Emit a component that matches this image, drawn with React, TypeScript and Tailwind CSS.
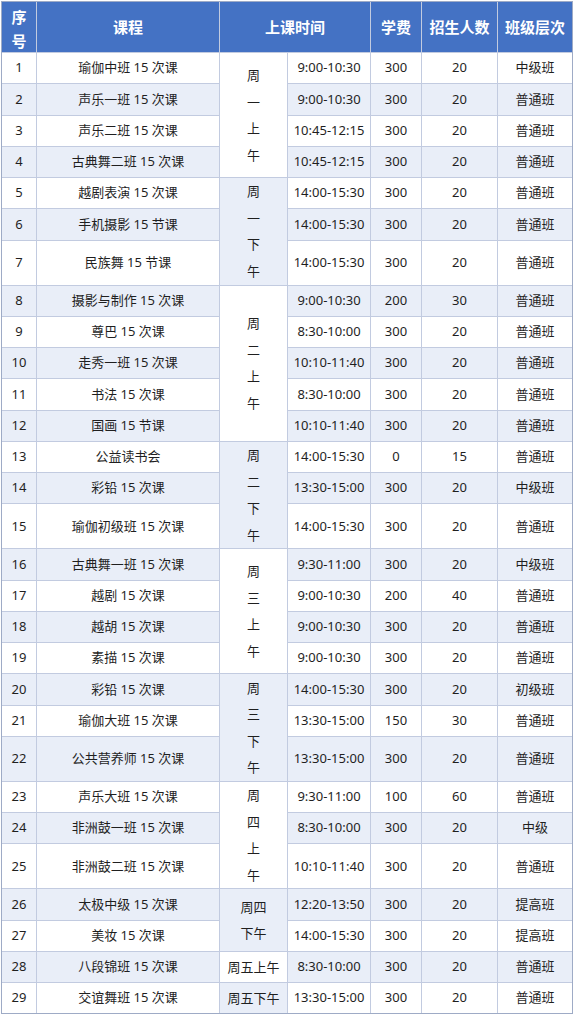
import React from "react";

type Row = [number, string, string, string, string, string];

const rows: Row[] = [
  [1, "瑜伽中班 15 次课", "9:00-10:30", "300", "20", "中级班"],
  [2, "声乐一班 15 次课", "9:00-10:30", "300", "20", "普通班"],
  [3, "声乐二班 15 次课", "10:45-12:15", "300", "20", "普通班"],
  [4, "古典舞二班 15 次课", "10:45-12:15", "300", "20", "普通班"],
  [5, "越剧表演 15 次课", "14:00-15:30", "300", "20", "普通班"],
  [6, "手机摄影 15 节课", "14:00-15:30", "300", "20", "普通班"],
  [7, "民族舞 15 节课", "14:00-15:30", "300", "20", "普通班"],
  [8, "摄影与制作 15 次课", "9:00-10:30", "200", "30", "普通班"],
  [9, "尊巴 15 次课", "8:30-10:00", "300", "20", "普通班"],
  [10, "走秀一班 15 次课", "10:10-11:40", "300", "20", "普通班"],
  [11, "书法 15 次课", "8:30-10:00", "300", "20", "普通班"],
  [12, "国画 15 节课", "10:10-11:40", "300", "20", "普通班"],
  [13, "公益读书会", "14:00-15:30", "0", "15", "普通班"],
  [14, "彩铅 15 次课", "13:30-15:00", "300", "20", "中级班"],
  [15, "瑜伽初级班 15 次课", "14:00-15:30", "300", "20", "普通班"],
  [16, "古典舞一班 15 次课", "9:30-11:00", "300", "20", "中级班"],
  [17, "越剧 15 次课", "9:00-10:30", "200", "40", "普通班"],
  [18, "越胡 15 次课", "9:00-10:30", "300", "20", "普通班"],
  [19, "素描 15 次课", "9:00-10:30", "300", "20", "普通班"],
  [20, "彩铅 15 次课", "14:00-15:30", "300", "20", "初级班"],
  [21, "瑜伽大班 15 次课", "13:30-15:00", "150", "30", "普通班"],
  [22, "公共营养师 15 次课", "13:30-15:00", "300", "20", "普通班"],
  [23, "声乐大班 15 次课", "9:30-11:00", "100", "60", "普通班"],
  [24, "非洲鼓一班 15 次课", "8:30-10:00", "300", "20", "中级"],
  [25, "非洲鼓二班 15 次课", "10:10-11:40", "300", "20", "普通班"],
  [26, "太极中级 15 次课", "12:20-13:50", "300", "20", "提高班"],
  [27, "美妆 15 次课", "14:00-15:30", "300", "20", "提高班"],
  [28, "八段锦班 15 次课", "8:30-10:00", "300", "20", "普通班"],
  [29, "交谊舞班 15 次课", "13:30-15:00", "300", "20", "普通班"],
];

type Day = { lines: string[]; span: string; blue: boolean };

const days: Record<number, Day> = {
  1: { lines: ["周", "一", "上", "午"], span: "row-span-4", blue: false },
  5: { lines: ["周", "一", "下", "午"], span: "row-span-3", blue: true },
  8: { lines: ["周", "二", "上", "午"], span: "row-span-5", blue: false },
  13: { lines: ["周", "二", "下", "午"], span: "row-span-3", blue: true },
  16: { lines: ["周", "三", "上", "午"], span: "row-span-4", blue: false },
  20: { lines: ["周", "三", "下", "午"], span: "row-span-3", blue: true },
  23: { lines: ["周", "四", "上", "午"], span: "row-span-3", blue: false },
  26: { lines: ["周四", "下午"], span: "row-span-2", blue: true },
  28: { lines: ["周五上午"], span: "row-span-1", blue: false },
  29: { lines: ["周五下午"], span: "row-span-1", blue: true },
};

const cell = "flex items-center justify-center text-center";

export default function App() {
  return (
    <div
      className="w-[575px] min-h-[1016px] bg-white"
      style={{ fontFamily: '"Noto Sans", "Noto Sans CJK SC", sans-serif' }}
    >
      <div className="ml-px mt-px w-[572px] border border-[#9eabc6] bg-[#c2cbe0]">
        <div className="grid gap-px grid-cols-[34px_182px_67px_82px_50px_75px_74px] grid-rows-[50px_repeat(6,30.25px)_44px_repeat(7,30.25px)_44px_repeat(6,30.25px)_44px_repeat(2,30.25px)_44px_repeat(4,30.25px)] text-[13px] text-[#1f1f1f]">
          <div className={`${cell} flex-col pt-1 bg-[#4472c4] text-white font-bold text-[15px] leading-[24px]`}>
            <span>序</span>
            <span>号</span>
          </div>
          <div className={`${cell} bg-[#4472c4] text-white font-bold text-[15px]`}>课程</div>
          <div className={`${cell} col-span-2 bg-[#4472c4] text-white font-bold text-[15px]`}>上课时间</div>
          <div className={`${cell} bg-[#4472c4] text-white font-bold text-[15px]`}>学费</div>
          <div className={`${cell} bg-[#4472c4] text-white font-bold text-[15px]`}>招生人数</div>
          <div className={`${cell} bg-[#4472c4] text-white font-bold text-[15px]`}>班级层次</div>

          {rows.map(([n, course, time, fee, num, level]) => {
            const bg = n % 2 === 0 ? "bg-[#e9eef8]" : "bg-white";
            const d = days[n];
            return (
              <React.Fragment key={n}>
                <div className={`${cell} ${bg}`}>{n}</div>
                <div className={`${cell} ${bg}`}>{course}</div>
                {d && (
                  <div
                    className={`${cell} ${d.span} flex-col leading-[26.5px] ${
                      d.blue ? "bg-[#e9eef8]" : "bg-white"
                    }`}
                  >
                    {d.lines.map((l, i) => (
                      <span key={i}>{l}</span>
                    ))}
                  </div>
                )}
                <div className={`${cell} ${bg}`}>{time}</div>
                <div className={`${cell} ${bg}`}>{fee}</div>
                <div className={`${cell} ${bg}`}>{num}</div>
                <div className={`${cell} ${bg}`}>{level}</div>
              </React.Fragment>
            );
          })}
        </div>
      </div>
    </div>
  );
}
